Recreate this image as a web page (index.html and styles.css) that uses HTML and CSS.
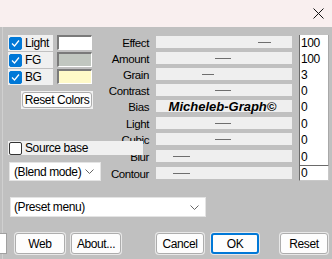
FILE: index.html
```html
<!DOCTYPE html>
<html lang="en">
<head>
  <meta charset="UTF-8" />
  <title>Filter</title>
  <link rel="stylesheet" href="styles.css">
</head>
<body>

  <!-- barra de título -->
  <div class="titlebar">
    <svg class="close" width="11" height="11" viewBox="0 0 11 11">
      <path d="M0.5 0.5 L10.5 10.5 M10.5 0.5 L0.5 10.5" stroke="#111" stroke-width="1" fill="none" />
    </svg>
  </div>

  <div class="dialog">
    <div class="top">

      <!-- coluna esquerda -->
      <div class="left">
        <div class="colorrow">
          <label class="chk"><span class="box on"><svg width="9" height="9" viewBox="0 0 9 9"><path d="M1 4.5 L3.5 7 L8 1.5" stroke="#fff" stroke-width="1.2" fill="none"/></svg></span>Light</label>
          <span class="swatch sw-light"></span>
        </div>
        <div class="colorrow">
          <label class="chk"><span class="box on"><svg width="9" height="9" viewBox="0 0 9 9"><path d="M1 4.5 L3.5 7 L8 1.5" stroke="#fff" stroke-width="1.2" fill="none"/></svg></span>FG</label>
          <span class="swatch sw-fg"></span>
        </div>
        <div class="colorrow">
          <label class="chk"><span class="box on"><svg width="9" height="9" viewBox="0 0 9 9"><path d="M1 4.5 L3.5 7 L8 1.5" stroke="#fff" stroke-width="1.2" fill="none"/></svg></span>BG</label>
          <span class="swatch sw-bg"></span>
        </div>

        <div class="panel reset-panel"><button class="btn">Reset Colors</button></div>

        <label class="source"><span class="box"></span>Source base</label>

        <div class="select blend">
          <span>(Blend mode)</span>
          <svg width="9" height="5" viewBox="0 0 9 5"><path d="M0.5 0.5 L4.5 4.5 L8.5 0.5" stroke="#666" fill="none"/></svg>
        </div>
      </div>

      <!-- parâmetros -->
      <div class="params">
        <span class="lbl">Effect</span>
        <div class="slider"><i class="thumb" style="margin-left:102px;width:13px"></i></div>
        <div class="num">100</div>

        <span class="lbl">Amount</span>
        <div class="slider"><i class="thumb" style="margin-left:59px"></i></div>
        <div class="num">100</div>

        <span class="lbl">Grain</span>
        <div class="slider"><i class="thumb" style="margin-left:46px;width:12px"></i></div>
        <div class="num">3</div>

        <span class="lbl">Contrast</span>
        <div class="slider"><i class="thumb" style="margin-left:59px"></i></div>
        <div class="num">0</div>

        <span class="lbl">Bias</span>
        <div class="slider brand">Micheleb-Graph©</div>
        <div class="num">0</div>

        <span class="lbl">Light</span>
        <div class="slider"><i class="thumb" style="margin-left:59px"></i></div>
        <div class="num">0</div>

        <span class="lbl">Cubic</span>
        <div class="slider"><i class="thumb" style="margin-left:59px"></i></div>
        <div class="num">0</div>

        <span class="lbl">Blur</span>
        <div class="slider"><i class="thumb" style="margin-left:17px;width:17px"></i></div>
        <div class="num">0</div>

        <span class="lbl">Contour</span>
        <div class="slider"><i class="thumb" style="margin-left:17px;width:17px"></i></div>
        <div class="num last">0</div>
      </div>
    </div>

    <div class="select preset">
      <span>(Preset menu)</span>
      <svg width="9" height="5" viewBox="0 0 9 5"><path d="M0.5 0.5 L4.5 4.5 L8.5 0.5" stroke="#666" fill="none"/></svg>
    </div>

    <!-- botões -->
    <div class="buttons">
      <span class="stub"></span>
      <button class="btn b-web">Web</button>
      <button class="btn b-about">About...</button>
      <button class="btn b-cancel">Cancel</button>
      <button class="btn b-ok">OK</button>
      <button class="btn b-reset">Reset</button>
    </div>
  </div>

</body>
</html>
```

FILE: styles.css
```css
body {
  margin: 0;
  width: 332px;
  height: 259px;
  overflow: hidden;
  background: #c0c0c0;
  font-family: "Liberation Sans", Arial, sans-serif;
  font-size: 11px;
  letter-spacing: -0.4px;
  color: #000;
  white-space: nowrap;
}

.titlebar {
  height: 27px;
  background: #f9efef;
  display: flex;
  justify-content: flex-end;
  align-items: center;
  padding-right: 8px;
  box-sizing: border-box;
}

.dialog {
  height: 232px;
  box-shadow: inset 3px 0 0 -1px #c0c0c0, inset 3px 0 0 #d0d0d0;
}

.top {
  display: flex;
  padding: 8px 0 0 8px;
}

/* coluna esquerda */
.left {
  width: 96px;
  display: flex;
  flex-direction: column;
}

.colorrow {
  display: flex;
  height: 16px;
  margin-bottom: 1px;
  gap: 4px;
}

.chk {
  width: 45px;
  background: #f0f0f0;
  display: flex;
  align-items: center;
  gap: 3px;
  padding-left: 1px;
  box-sizing: border-box;
  font-size: 12px;
}

.box {
  width: 13px;
  height: 13px;
  box-sizing: border-box;
  border: 1px solid #333;
  border-radius: 2px;
  background: #fff;
  display: flex;
  align-items: center;
  justify-content: center;
  flex: none;
}

.box.on {
  background: #0078d7;
  border-color: #0078d7;
}

.swatch {
  width: 35px;
  height: 15px;
  box-sizing: border-box;
  border-top: 2px solid #7a7a7a;
  border-left: 2px solid #7a7a7a;
  border-right: 1px solid #fff;
  border-bottom: 1px solid #fff;
}

.sw-light { background: #ffffff; }
.sw-fg { background: #c1c7c0; }
.sw-bg { background: #fffac8; }

.panel {
  background: #f0f0f0;
  padding: 1px;
  box-sizing: border-box;
}

.reset-panel {
  width: 72px;
  height: 18px;
  margin: 5px 0 0 13px;
  display: flex;
}

.btn {
  font: inherit;
  font-size: 12px;
  letter-spacing: -0.4px;
  color: #000;
  background: #fdfdfd;
  border: 1px solid #adadad;
  border-radius: 3px;
  padding: 0;
  box-sizing: border-box;
  height: 100%;
  width: 100%;
}

.source {
  position: relative;
  z-index: 1;
  width: 135px;
  height: 14px;
  margin-top: 32px;
  background: #f0f0f0;
  display: flex;
  align-items: center;
  gap: 3px;
  padding-left: 1px;
  box-sizing: border-box;
  font-size: 12px;
}

.select {
  background: #fff;
  border: 1px solid #e4e4e4;
  box-sizing: border-box;
  display: flex;
  align-items: center;
  justify-content: space-between;
  padding: 0 6px 0 4px;
  font-size: 12px;
}

.blend {
  width: 92px;
  height: 19px;
  margin: 7px 0 0 1px;
}

.preset {
  width: 196px;
  height: 20px;
  margin: 15px 0 0 10px;
  padding-left: 3px;
}

/* parâmetros */
.params {
  display: grid;
  grid-template-columns: 45px 136px 30px;
  grid-template-rows: 16px 16px 16px 16px 17px 16px 17px 17px 16px;
  column-gap: 7px;
}

.lbl {
  text-align: right;
  line-height: 16px;
  font-size: 11.5px;
}

.slider {
  height: 12px;
  margin-top: 1px;
  background: #efefef;
  display: flex;
  align-items: center;
}

.thumb {
  display: block;
  width: 16px;
  height: 1px;
  background: #6e6e6e;
}

.brand {
  justify-content: center;
  font-weight: bold;
  font-style: italic;
  font-size: 13px;
  letter-spacing: 0;
  padding-right: 3px;
}

.num {
  background: #fff;
  border-left: 1px solid #6a6a6a;
  border-right: 1px solid #a8a8a8;
  padding-left: 1px;
  line-height: 16px;
  font-size: 12px;
}

.num.last {
  margin-top: -1px;
  height: 16px;
  box-sizing: border-box;
  line-height: 14px;
  border: 1px solid;
  border-color: #6a6a6a #c8c8c8 #c8c8c8 #6a6a6a;
}

/* botões */
.buttons {
  display: flex;
  margin-top: 16px;
  height: 21px;
}

.buttons .btn {
  width: 48px;
  box-shadow: 0 0 0 1px #e8e8e8;
}

.stub {
  width: 7px;
  background: #fff;
  border: 1px solid #a0a0a0;
  border-left: none;
  box-sizing: border-box;
}

.b-web { margin-left: 8px; width: 50px !important; }
.b-about { margin-left: 6px; width: 50px !important; }
.b-cancel { margin-left: 35px; }
.b-ok { margin-left: 7px; border: 2px solid #0078d7 !important; }
.b-reset { margin-left: 21px; }
```
